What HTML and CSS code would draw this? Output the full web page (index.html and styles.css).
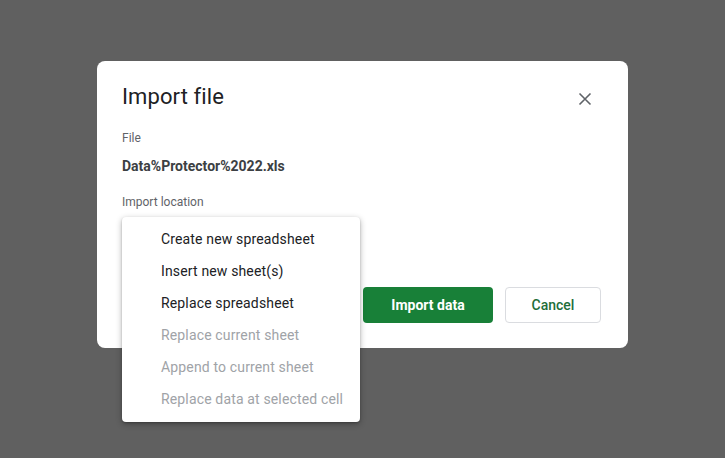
FILE: index.html
```html
<!DOCTYPE html>
<html lang="en">
<head>
    <meta charset="UTF-8">
    <title>Import file</title>
    <link rel="stylesheet" href="styles.css">
</head>
<body>
    <div class="dialog">
        <div class="dialog-header">
            <h1 class="dialog-title">Import file</h1>
            <button class="close-button" aria-label="Close">
                <svg width="14" height="14" viewBox="0 0 14 14">
                    <path d="M1.5 1.5 L12.5 12.5 M12.5 1.5 L1.5 12.5" stroke="#5f6368" stroke-width="1.6" fill="none"/>
                </svg>
            </button>
        </div>
        <div class="field-label">File</div>
        <div class="file-name">Data%Protector%2022.xls</div>
        <div class="field-label location-label">Import location</div>
        <div class="select-spacer"></div>
        <div class="actions">
            <button class="btn btn-primary">Import data</button>
            <button class="btn btn-secondary">Cancel</button>
        </div>

        <!-- open dropdown -->
        <ul class="menu">
            <li>Create new spreadsheet</li>
            <li>Insert new sheet(s)</li>
            <li>Replace spreadsheet</li>
            <li class="disabled">Replace current sheet</li>
            <li class="disabled">Append to current sheet</li>
            <li class="disabled">Replace data at selected cell</li>
        </ul>
    </div>
</body>
</html>
```

FILE: styles.css
```css
html, body {
    margin: 0;
    padding: 0;
    height: 100%;
}
body {
    background: #606060;
    font-family: Roboto, "Liberation Sans", Arial, sans-serif;
    color: #202124;
    display: flex;
    justify-content: center;
    align-items: flex-start;
    padding-top: 61px;
    box-sizing: border-box;
    overflow: hidden;
}
.dialog {
    position: relative;
    width: 531px;
    box-sizing: border-box;
    background: #fff;
    border-radius: 8px;
    padding: 22px 27px 25px 25px;
}
.dialog-header {
    display: flex;
    justify-content: space-between;
    align-items: center;
    height: 28px;
}
.dialog-title {
    margin: 0;
    font-size: 22px;
    font-weight: 400;
    line-height: 28px;
    color: #202124;
    letter-spacing: 0.1px;
}
.close-button {
    border: none;
    background: none;
    padding: 0;
    width: 14px;
    height: 14px;
    margin-right: 9px;
    margin-top: 4px;
    display: flex;
    cursor: pointer;
}
.field-label {
    font-size: 12px;
    line-height: 16px;
    color: #5f6368;
    margin-top: 19px;
}
.file-name {
    font-size: 14px;
    font-weight: 700;
    line-height: 20px;
    color: #3c4043;
    margin-top: 10px;
}
.location-label {
    margin-top: 18px;
}
.select-spacer {
    height: 77px;
}
.actions {
    display: flex;
    justify-content: flex-end;
    gap: 12px;
}
.btn {
    height: 36px;
    border-radius: 4px;
    font-family: inherit;
    font-size: 14px;
    font-weight: 500;
    cursor: pointer;
    box-sizing: border-box;
}
.btn-primary {
    width: 130px;
    background: #188038;
    color: #fff;
    border: none;
    font-weight: 700;
}
.btn-secondary {
    width: 96px;
    background: #fff;
    color: #1e6e3a;
    border: 1px solid #dadce0;
}
.menu {
    position: absolute;
    left: 25px;
    top: 156px;
    width: 238px;
    margin: 0;
    padding: 6px 0 7px;
    list-style: none;
    background: #fff;
    border-radius: 4px;
    box-shadow: 0 2px 6px rgba(0, 0, 0, 0.3), 0 1px 2px rgba(0, 0, 0, 0.2);
}
.menu li {
    height: 32px;
    line-height: 32px;
    padding-left: 39px;
    font-size: 14px;
    color: #202124;
    letter-spacing: 0.15px;
}
.menu li.disabled {
    color: #a0a3a7;
}
```
